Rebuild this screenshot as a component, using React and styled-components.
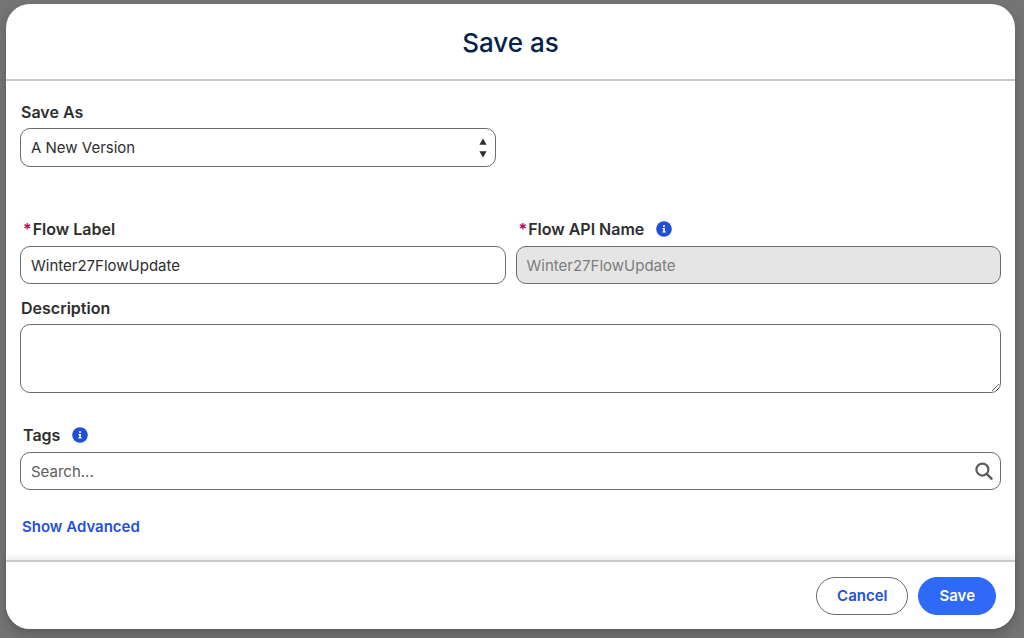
import React from "react";
import styled, { createGlobalStyle } from "styled-components";

const GlobalStyle = createGlobalStyle`
  *, *::before, *::after { box-sizing: border-box; }
  body {
    margin: 0;
    background: #747474;
    color: #2e2e2e;
    font-family: Inter, "Liberation Sans", sans-serif;
    font-size: 16px;
    line-height: 20px;
  }
  button, input, select, textarea { font: inherit; color: inherit; }
`;

const Backdrop = styled.div`
  padding: 4px 9px 9px 6px;
`;

const Dialog = styled.form`
  display: flex;
  flex-direction: column;
  background: #fff;
  border-radius: 24px;
  box-shadow: 0 6px 12px rgba(0, 0, 0, 0.2);
`;

const Header = styled.header`
  padding: 21px 24px 18px;
  border-bottom: 2px solid #c9c9c9;
  text-align: center;
`;

const Title = styled.h1`
  margin: 0;
  color: #03234d;
  font-size: 26px;
  font-weight: 500;
  line-height: 36px;
`;

const Body = styled.main`
  padding: 21px 14px 23px;
`;

const Row = styled.div`
  display: grid;
  grid-template-columns: repeat(${(p) => p.$columns || 1}, minmax(0, 1fr));
  gap: 10px;
  margin-bottom: ${(p) => p.$after || 0}px;
`;

const Field = styled.div`
  display: flex;
  flex-direction: column;
  gap: ${(p) => (p.$roomy ? 7 : 6)}px;
  padding-right: ${(p) => (p.$inset ? 10 : 0)}px;
`;

const LabelRow = styled.div`
  display: flex;
  align-items: center;
  gap: 12px;
  height: 20px;
  padding-left: ${(p) => (p.$indent ? 3 : 1)}px;
`;

const Label = styled.label`
  font-weight: 600;
`;

const Required = styled.abbr`
  margin-right: 1px;
  color: #b60554;
  text-decoration: none;
`;

const ControlWrap = styled.div`
  position: relative;
  display: flex;
`;

const TextInput = styled.input`
  width: 100%;
  height: 38px;
  padding: 0 10px;
  border: 1px solid #6b6b6b;
  border-radius: 10px;
  background: #fff;
  font-size: 15px;
  outline: none;

  &::placeholder { color: #5c5c5c; opacity: 1; }
  &:disabled { background: #e5e5e5; color: #7d7d7d; }
`;

const Select = styled.select`
  width: 100%;
  height: 39px;
  padding: 0 32px 0 10px;
  border: 1px solid #6b6b6b;
  border-radius: 10px;
  background: #fff;
  font-size: 15px;
  appearance: none;
`;

const TextArea = styled.textarea`
  display: block;
  width: 100%;
  height: 69px;
  padding: 8px 10px;
  border: 1px solid #6b6b6b;
  border-radius: 10px;
  background: #fff;
  font-size: 15px;
  resize: vertical;
`;

const TrailingIcon = styled.svg`
  position: absolute;
  top: 50%;
  right: ${(p) => p.$right}px;
  transform: translateY(-50%);
  pointer-events: none;
`;

const InfoButton = styled.button`
  display: flex;
  padding: 0;
  border: 0;
  background: none;
  cursor: pointer;
`;

const AdvancedLink = styled.a`
  display: inline-block;
  margin-left: 2px;
  color: #2250d9;
  font-size: 15px;
  font-weight: 600;
  text-decoration: none;
`;

const Footer = styled.footer`
  display: flex;
  justify-content: flex-end;
  gap: 10px;
  padding: 15px 19px 14px;
  border-top: 2px solid #c9c9c9;
  border-radius: 0 0 24px 24px;
  background: #fff;
  box-shadow: 0 -3px 6px rgba(0, 0, 0, 0.08);
`;

const Button = styled.button`
  height: 38px;
  padding: 0 20px;
  border: 1px solid ${(p) => (p.$primary ? "#2e69f7" : "#6b6b6b")};
  border-radius: 19px;
  background: ${(p) => (p.$primary ? "#2e69f7" : "#fff")};
  color: ${(p) => (p.$primary ? "#fff" : "#2250d9")};
  font-size: 15px;
  font-weight: 600;
  cursor: pointer;
`;

function Info({ label }) {
  return (
    <InfoButton type="button" aria-label={label}>
      <svg width="16" height="16" viewBox="0 0 16 16" aria-hidden="true">
        <circle cx="8" cy="8" r="7.8" fill="#204fd6" />
        <circle cx="8" cy="5" r="1.1" fill="#fff" />
        <path d="M6.4 6.9h2.5v3.7h.9v1H6.3v-1h.9V7.9h-.8z" fill="#fff" />
      </svg>
    </InfoButton>
  );
}

export default function App() {
  return (
    <>
      <GlobalStyle />
      <Backdrop>
        <Dialog role="dialog" aria-labelledby="title" onSubmit={(e) => e.preventDefault()}>
          <Header>
            <Title id="title">Save as</Title>
          </Header>
          <Body>
            <Row $columns={2} $after={52}>
              <Field $inset>
                <LabelRow>
                  <Label htmlFor="save-as">Save As</Label>
                </LabelRow>
                <ControlWrap>
                  <Select id="save-as">
                    <option>A New Version</option>
                  </Select>
                  <TrailingIcon $right={9} width="8" height="20" viewBox="0 0 8 20" aria-hidden="true">
                    <path d="M4 .4 7.6 6.8H.4zM4 19.6.4 13.2h7.2z" fill="#2e2e2e" />
                  </TrailingIcon>
                </ControlWrap>
              </Field>
            </Row>
            <Row $columns={2} $after={14}>
              <Field $roomy>
                <LabelRow $indent>
                  <Label htmlFor="flow-label">
                    <Required title="required">*</Required>Flow Label
                  </Label>
                </LabelRow>
                <TextInput id="flow-label" type="text" defaultValue="Winter27FlowUpdate" />
              </Field>
              <Field $roomy>
                <LabelRow $indent>
                  <Label htmlFor="api-name">
                    <Required title="required">*</Required>Flow API Name
                  </Label>
                  <Info label="Flow API Name help" />
                </LabelRow>
                <TextInput id="api-name" type="text" defaultValue="Winter27FlowUpdate" disabled />
              </Field>
            </Row>
            <Row $after={32}>
              <Field>
                <LabelRow>
                  <Label htmlFor="description">Description</Label>
                </LabelRow>
                <TextArea id="description" />
              </Field>
            </Row>
            <Row $after={26}>
              <Field $roomy>
                <LabelRow $indent>
                  <Label htmlFor="tags">Tags</Label>
                  <Info label="Tags help" />
                </LabelRow>
                <ControlWrap>
                  <TextInput id="tags" type="text" placeholder="Search..." />
                  <TrailingIcon $right={8} width="18" height="18" viewBox="0 0 18 18" fill="none" stroke="#5c5c5c" aria-hidden="true">
                    <circle cx="7.4" cy="7.6" r="6" strokeWidth="2.2" />
                    <path d="m11.9 12.1 4.6 4.6" strokeWidth="2.5" strokeLinecap="round" />
                  </TrailingIcon>
                </ControlWrap>
              </Field>
            </Row>
            <AdvancedLink href="#advanced">Show Advanced</AdvancedLink>
          </Body>
          <Footer>
            <Button type="button">Cancel</Button>
            <Button type="submit" $primary>Save</Button>
          </Footer>
        </Dialog>
      </Backdrop>
    </>
  );
}
